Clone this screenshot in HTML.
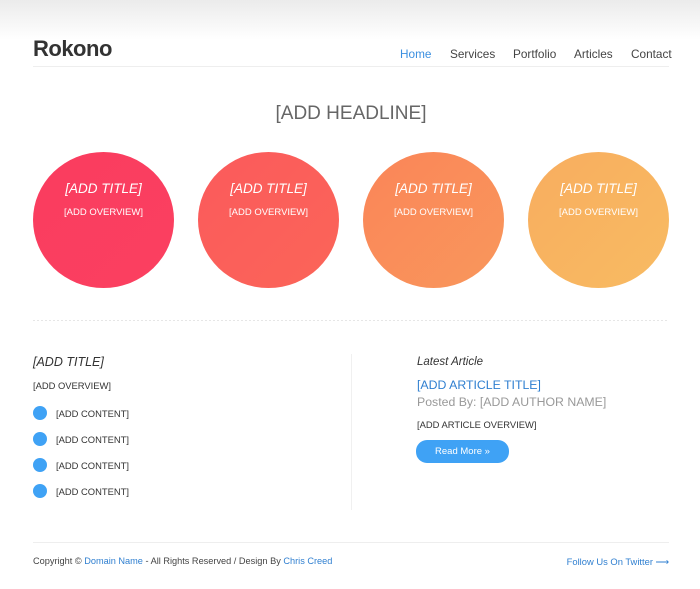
<!DOCTYPE html>
<html><head><meta charset="utf-8"><style>
*{margin:0;padding:0;box-sizing:border-box}
body{width:700px;height:589px;background:#fff;font-family:"Liberation Sans",Arial,sans-serif;position:relative;overflow:hidden;color:#444}
.top{position:absolute;left:0;top:0;width:700px;height:40px;background:linear-gradient(#ebebeb,#fff)}
.abs{position:absolute;white-space:nowrap}
.logo{left:33px;top:36px;font-size:22px;font-weight:bold;color:#333;letter-spacing:-0.5px}
.nav{top:47px;font-size:11.8px;color:#444}
.hr{position:absolute;left:33px;width:636px;height:1px;background:#eee}
.c{position:absolute;top:152px;width:141px;height:136px;border-radius:50%;color:#fff;text-align:center}
.c .t{position:absolute;top:29px;width:100%;font-size:13.5px;font-style:italic}
.c .o{position:absolute;top:55px;width:100%;font-size:9.5px}
.s{font-size:9.4px;color:#333}
.dot{position:absolute;left:33px;width:14px;height:14px;border-radius:50%;background:#3fa2f5}
a{color:#2f7fd0;text-decoration:none}
</style></head><body>
<div class="top"></div>
<div class="abs logo">Rokono</div>
<div class="abs nav" style="left:400px;color:#3b8fe0">Home</div>
<div class="abs nav" style="left:450px">Services</div>
<div class="abs nav" style="left:513px">Portfolio</div>
<div class="abs nav" style="left:574px">Articles</div>
<div class="abs nav" style="left:631px">Contact</div>
<div class="hr" style="top:66px"></div>
<div class="abs" style="left:0;width:702px;text-align:center;top:103px;font-size:19px;color:#666">[ADD HEADLINE]</div>
<div class="c" style="left:33px;background:linear-gradient(135deg,#fa3c5f,#fb4060)"><div class="t">[ADD TITLE]</div><div class="o">[ADD OVERVIEW]</div></div>
<div class="c" style="left:198px;background:linear-gradient(135deg,#fb5a5c,#fb6558)"><div class="t">[ADD TITLE]</div><div class="o">[ADD OVERVIEW]</div></div>
<div class="c" style="left:363px;background:linear-gradient(135deg,#fa8558,#f9975c)"><div class="t">[ADD TITLE]</div><div class="o">[ADD OVERVIEW]</div></div>
<div class="c" style="left:528px;background:linear-gradient(135deg,#f8ad5f,#f8bb62)"><div class="t">[ADD TITLE]</div><div class="o">[ADD OVERVIEW]</div></div>
<div class="hr" style="top:320px;background:repeating-linear-gradient(90deg,#e6e6e6 0 2px,transparent 2px 4px)"></div>
<div style="position:absolute;left:351px;top:354px;width:1px;height:156px;background:#f0f0f0"></div>
<div class="abs" style="left:33px;top:355px;font-size:12.5px;font-style:italic;color:#333">[ADD TITLE]</div>
<div class="abs s" style="left:33px;top:380px">[ADD OVERVIEW]</div>
<div class="dot" style="top:406px"></div><div class="abs s" style="left:56px;top:408px">[ADD CONTENT]</div>
<div class="dot" style="top:432px"></div><div class="abs s" style="left:56px;top:434px">[ADD CONTENT]</div>
<div class="dot" style="top:458px"></div><div class="abs s" style="left:56px;top:460px">[ADD CONTENT]</div>
<div class="dot" style="top:484px"></div><div class="abs s" style="left:56px;top:486px">[ADD CONTENT]</div>
<div class="abs" style="left:417px;top:356px;font-size:11.5px;font-style:italic;color:#333">Latest Article</div>
<div class="abs" style="left:417px;top:378px;font-size:12.3px;color:#2f7fd0">[ADD ARTICLE TITLE]</div>
<div class="abs" style="left:417px;top:395px;font-size:12.3px;color:#999">Posted By: [ADD AUTHOR NAME]</div>
<div class="abs s" style="left:417px;top:419px">[ADD ARTICLE OVERVIEW]</div>
<div class="abs" style="left:416px;top:440px;width:93px;height:23px;border-radius:11px;background:#3fa2f5;color:#fff;font-size:9.5px;text-align:center;line-height:23px">Read More »</div>
<div class="hr" style="top:542px"></div>
<div class="abs" style="left:33px;top:556px;font-size:9.2px;color:#444">Copyright © <a>Domain Name</a> - All Rights Reserved / Design By <a>Chris Creed</a></div>
<div class="abs" style="right:31px;top:556px;font-size:9.4px;color:#2f7fd0">Follow Us On Twitter ⟶</div>
</body></html>
